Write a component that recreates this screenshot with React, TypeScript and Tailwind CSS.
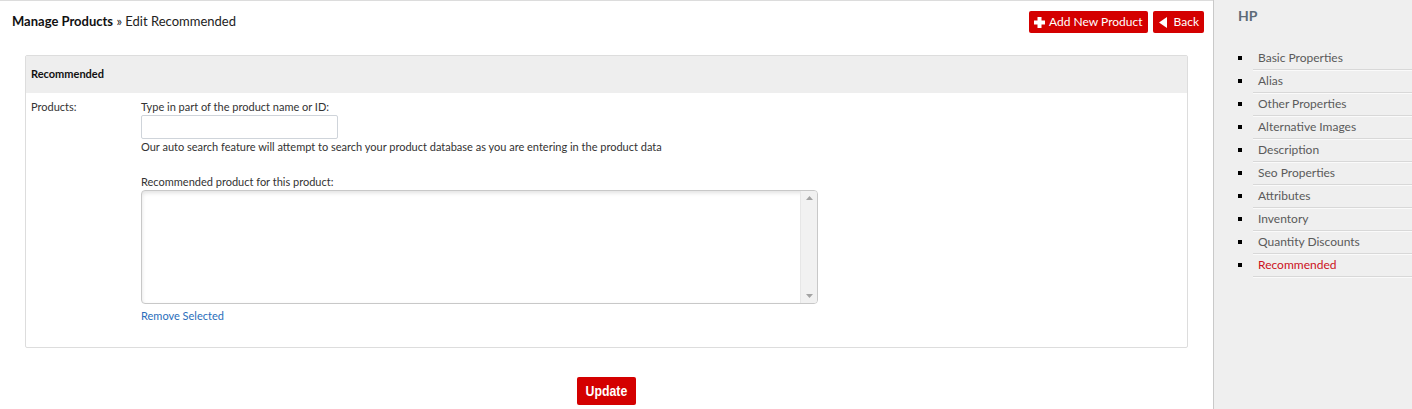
import React from 'react';

const sideLinks = [
  'Basic Properties',
  'Alias',
  'Other Properties',
  'Alternative Images',
  'Description',
  'Seo Properties',
  'Attributes',
  'Inventory',
  'Quantity Discounts',
  'Recommended',
];

const PlusIcon = () => (
  <svg width="11" height="11" viewBox="0 0 11 11" className="shrink-0">
    <path d="M3.5 0h4v3.5H11v4H7.5V11h-4V7.5H0v-4h3.5z" fill="#fff" />
  </svg>
);

const BackIcon = () => (
  <svg width="8" height="11" viewBox="0 0 8 11" className="shrink-0">
    <path d="M8 0v11L0 5.5z" fill="#fff" />
  </svg>
);

export default function App() {
  return (
    <div className="flex w-[1412px] h-[409px] overflow-hidden bg-white font-['Lato',sans-serif] text-[11px] text-[#333]">
      {/* Main Content */}
      <main className="w-[1213px] shrink-0 border-t border-[#dcdcdc] flex flex-col">
        <div className="flex items-start justify-between pl-[12px] pr-[9px] pt-[10px] h-[54px]">
          <h1 className="text-[13px] leading-[20px] text-[#222]">
            <span className="font-bold text-[#111]">Manage Products</span> » Edit Recommended
          </h1>
          <div className="flex gap-[5px]">
            <button className="flex items-center gap-[4px] h-[22px] px-[5px] bg-[#d40000] rounded-[2px] text-white text-[12px]">
              <PlusIcon />
              Add New Product
            </button>
            <button className="flex items-center gap-[7px] h-[22px] pl-[6px] pr-[5px] bg-[#d40000] rounded-[2px] text-white text-[12px]">
              <BackIcon />
              Back
            </button>
          </div>
        </div>

        <div className="mx-[25px] border border-[#dddddd] rounded-[2px]">
          <div className="h-[37px] bg-[#eeeeee] flex items-center px-[5px] font-bold text-[#111]">Recommended</div>
          <div className="flex px-[5px] pt-[6px] pb-[23px]">
            <div className="w-[110px] leading-[16px]">Products:</div>
            <div className="flex flex-col leading-[16px]">
              <div>Type in part of the product name or ID:</div>
              <input className="w-[197px] h-[24px] border border-[#cfd4da] rounded-[2px] outline-none" />
              <div>Our auto search feature will attempt to search your product database as you are entering in the product data</div>
              <div className="mt-[19px]">Recommended product for this product:</div>
              <div className="w-[677px] h-[114px] border border-[#c8c8c8] rounded-[4px] shadow-[inset_0_2px_4px_rgba(0,0,0,0.12)] flex justify-end overflow-hidden">
                <div className="w-[17px] h-full bg-[#f1f1f1] border-l border-[#e6e6e6] flex flex-col items-center justify-between py-[5px]">
                  <svg width="7" height="4" viewBox="0 0 7 4"><path d="M3.5 0L7 4H0z" fill="#a3a3a3" /></svg>
                  <svg width="7" height="4" viewBox="0 0 7 4"><path d="M0 0h7L3.5 4z" fill="#a3a3a3" /></svg>
                </div>
              </div>
              <a className="mt-[4px] text-[#2a6ebb] cursor-pointer">Remove Selected</a>
            </div>
          </div>
        </div>

        <div className="flex justify-center mt-[29px]">
          <button className="w-[59px] h-[28px] bg-[#d40000] rounded-[2px] text-white">
            <span className="inline-block scale-x-[0.82] font-bold text-[15px] font-['Liberation_Sans',sans-serif]">Update</span>
          </button>
        </div>
      </main>

      {/* Side Navigation */}
      <aside className="flex-1 border-l border-[#c9c9c9] bg-[#efefef] pt-[6px]">
        <div className="pl-[24px] h-[20px] leading-[20px] text-[14px] font-bold text-[#5d6b78]">HP</div>
        <ul className="mt-[21px] pl-[39px] list-[square] marker:text-black text-[12px]">
          {sideLinks.map((label) => (
            <li
              key={label}
              className={`h-[23px] leading-[22px] pl-[5px] border-b border-[#d8d8d8] shadow-[0_1px_0_#fafafa] ${
                label === 'Recommended' ? 'text-[#cc1122]' : 'text-[#5a5a5a]'
              }`}
            >
              {label}
            </li>
          ))}
        </ul>
      </aside>
    </div>
  );
}
